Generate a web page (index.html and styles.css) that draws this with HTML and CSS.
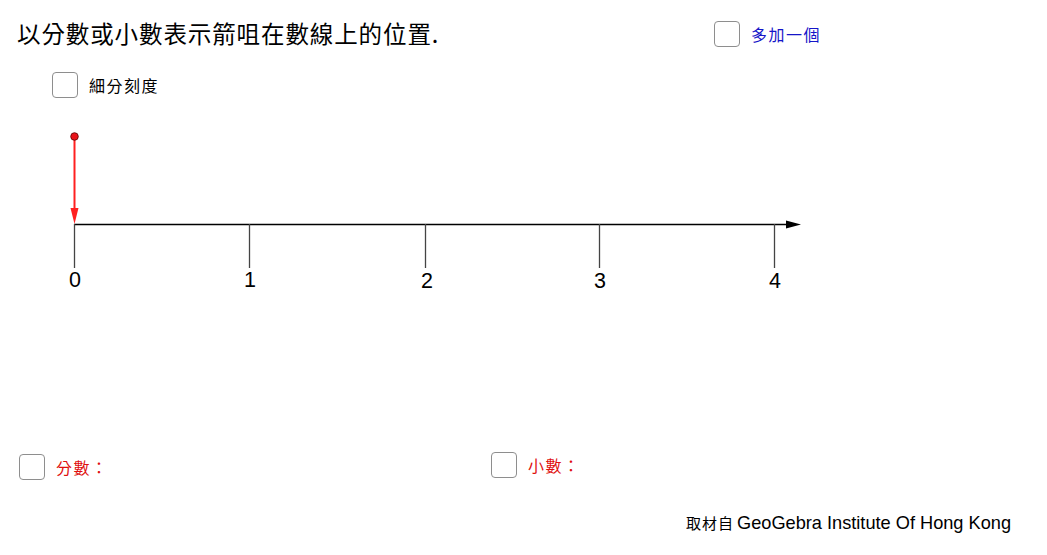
FILE: index.html
```html
<!DOCTYPE html>
<html lang="zh-Hant">
<head>
<meta charset="utf-8">
<title>數線</title>
<link rel="stylesheet" href="styles.css">
</head>
<body>
<div class="applet">
  <div class="title">以分數或小數表示箭咀在數線上的位置.</div>

  <label class="check check-more"><span class="box"></span><span class="lbl blue">多加一個</span></label>
  <label class="check check-sub"><span class="box"></span><span class="lbl">細分刻度</span></label>

  <svg class="graph" width="1047" height="555" viewBox="0 0 1047 555">
    <line x1="74" y1="224.5" x2="792" y2="224.5" stroke="#000" stroke-width="1.3"/>
    <polygon points="786,220.5 801,224.5 786,228.5" fill="#000"/>
    <g stroke="#444" stroke-width="1.3">
      <line x1="74.5" y1="224" x2="74.5" y2="268"/>
      <line x1="249.5" y1="224" x2="249.5" y2="268"/>
      <line x1="425.5" y1="224" x2="425.5" y2="268"/>
      <line x1="599.5" y1="224" x2="599.5" y2="268"/>
      <line x1="774.5" y1="224" x2="774.5" y2="268"/>
    </g>
    <g class="nums" font-size="21.5">
      <text x="75" y="287" text-anchor="middle">0</text>
      <text x="250" y="287" text-anchor="middle">1</text>
      <text x="427" y="288" text-anchor="middle">2</text>
      <text x="600" y="288" text-anchor="middle">3</text>
      <text x="775" y="288" text-anchor="middle">4</text>
    </g>
    <line x1="74.5" y1="137" x2="74.5" y2="212" stroke="#ff2020" stroke-width="2"/>
    <polygon points="70.5,208 78.5,208 74.5,224" fill="#ff2020"/>
    <circle cx="74.5" cy="136.5" r="3.8" fill="#e8141a" stroke="#5a0000" stroke-width="0.8"/>
  </svg>

  <label class="check check-frac"><span class="box"></span><span class="lbl red">分數：</span></label>
  <label class="check check-dec"><span class="box"></span><span class="lbl red">小數：</span></label>

  <div class="credit"><span class="cjk">取材自</span><span class="latin">GeoGebra Institute Of Hong Kong</span></div>
</div>
</body>
</html>
```

FILE: styles.css
```css
html, body {
  margin: 0;
  padding: 0;
  background: #fff;
}
.applet {
  position: relative;
  width: 1047px;
  height: 555px;
  overflow: hidden;
  font-family: "Noto Sans CJK TC", "Noto Sans CJK SC", sans-serif;
  color: #000;
}
.graph {
  position: absolute;
  left: 0;
  top: 0;
}
.nums {
  font-family: "Liberation Sans", Arial, sans-serif;
  fill: #000;
}
.title {
  position: absolute;
  left: 17px;
  top: 17px;
  font-size: 23.5px;
  line-height: 32px;
  letter-spacing: 0.9px;
  white-space: nowrap;
}
.check {
  position: absolute;
  display: flex;
  align-items: center;
  gap: 11px;
  white-space: nowrap;
}
.box {
  width: 24px;
  height: 24px;
  border: 1.8px solid #8e8e8e;
  border-radius: 4px;
  box-sizing: content-box;
  background: #fff;
}
.lbl {
  font-size: 16px;
  line-height: 20px;
  letter-spacing: 1.5px;
}
.blue { color: #1515c8; }
.red { color: #e01010; }
.check-more { left: 714px; top: 21px; }
.check-sub { left: 52px; top: 72px; }
.check-frac { left: 19px; top: 454px; }
.check-dec { left: 491px; top: 452px; }
.credit {
  position: absolute;
  left: 686px;
  top: 512px;
  display: flex;
  align-items: baseline;
  gap: 3px;
  white-space: nowrap;
}
.credit .cjk {
  font-size: 15px;
  letter-spacing: 1px;
}
.credit .latin {
  font-family: "Liberation Sans", Arial, sans-serif;
  font-size: 18.2px;
}
```
